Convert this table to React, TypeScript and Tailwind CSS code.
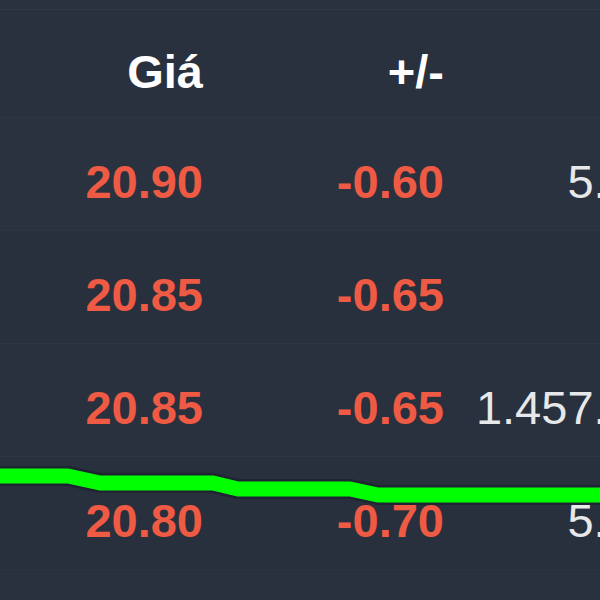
const rows = [
  { price: "20.90", change: "-0.60", vol: "5.200", bg: "bg-[#29323e]" },
  { price: "20.85", change: "-0.65", vol: "300", bg: "bg-[#27303c]" },
  { price: "20.85", change: "-0.65", vol: "1.457.300", bg: "bg-[#28313d]" },
  { price: "20.80", change: "-0.70", vol: "5.200", bg: "bg-[#27303c]" },
  { price: "20.80", change: "-0.70", vol: "2.100", bg: "bg-[#28313d]" },
];

export default function App() {
  return (
    <div
      className="relative h-[600px] w-[600px] overflow-hidden bg-[#28313d]"
      style={{ fontFamily: '"Liberation Sans", Arial, sans-serif' }}
    >
      <div className="h-[10px] border-b border-[#2e3844] bg-[#29323e]" />
      <div className="flex h-[107px] pt-[38px] text-[47px] font-bold leading-none text-white">
        <div className="w-[203px] shrink-0 text-right">Giá</div>
        <div className="w-[241px] shrink-0 text-right">+/-</div>
        <div className="w-[241px] shrink-0 text-right">KL</div>
      </div>
      {rows.map((r, i) => (
        <div
          key={i}
          className={`flex h-[113px] shrink-0 border-t border-[#2c3642] pt-[40px] text-[47px] leading-none ${r.bg}`}
        >
          <div className="w-[203px] shrink-0 text-right font-bold text-[#ee5a43]">{r.price}</div>
          <div className="w-[241px] shrink-0 text-right font-bold text-[#ee5a43]">{r.change}</div>
          <div className="w-[241px] shrink-0 whitespace-nowrap text-right text-[#e6e8ea]">{r.vol}</div>
        </div>
      ))}
      <svg className="pointer-events-none absolute left-0 top-0" width="600" height="600" viewBox="0 0 600 600">
        <polyline
          points="-10,476 68,476 100,483 213,483 238,489 350,489 378,495 610,495"
          fill="none"
          stroke="#1d2230"
          strokeWidth="20"
          strokeLinejoin="round"
          opacity="0.8"
        />
        <polyline
          points="-10,476 68,476 100,483 213,483 238,489 350,489 378,495 610,495"
          fill="none"
          stroke="#00ff00"
          strokeWidth="15"
          strokeLinejoin="round"
        />
      </svg>
    </div>
  );
}
